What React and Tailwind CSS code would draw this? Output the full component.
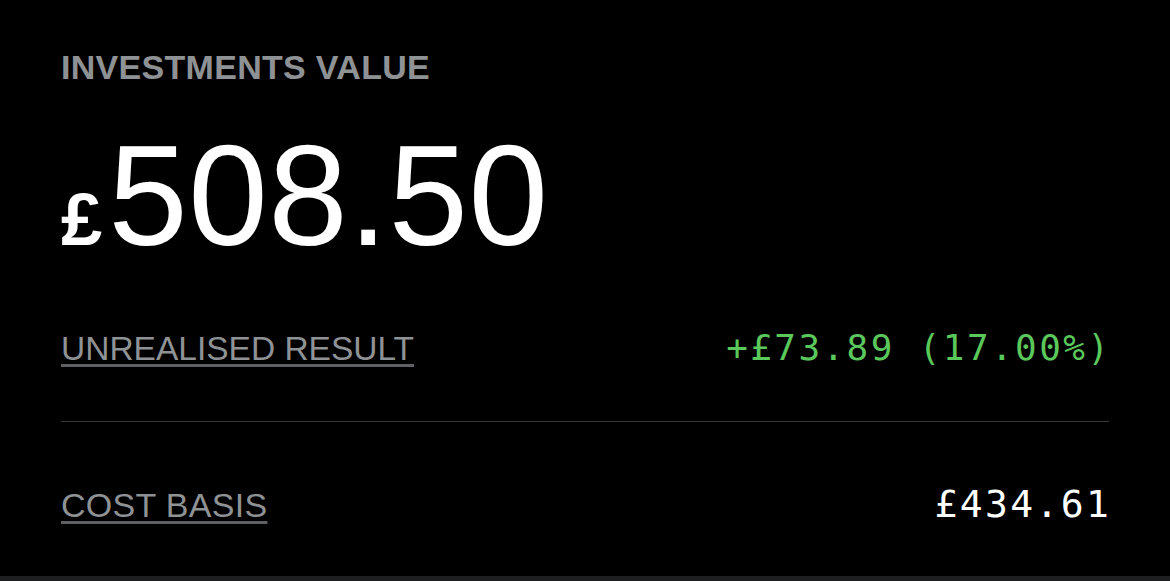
import React from 'react';

const sans = { fontFamily: '"Liberation Sans", Arial, sans-serif' };
const mono = { fontFamily: '"DejaVu Sans Mono", monospace' };

function Row({ label, labelClass, value, valueClass, className }) {
  return (
    <div className={`flex items-baseline justify-between h-[33px] ${className}`}>
      <span
        style={sans}
        className={`leading-none text-[#8f9295] underline decoration-[3px] decoration-[#5e6063] underline-offset-[4px] ${labelClass}`}
      >
        {label}
      </span>
      <span style={mono} className={valueClass}>
        {value}
      </span>
    </div>
  );
}

export default function App() {
  return (
    <div className="w-[1170px] h-[581px] bg-black flex flex-col overflow-hidden">
      <div className="flex-1 px-[61px] pt-[50px] flex flex-col">
        <div style={sans} className="text-[34px] leading-none font-bold tracking-[0.3px] text-[#8f9295]">
          INVESTMENTS VALUE
        </div>

        <div style={sans} className="flex items-baseline mt-[40px] h-[142px] text-white">
          <span className="text-[74px] leading-none font-semibold mr-[6px]">£</span>
          <span className="text-[143px] leading-none tracking-[0.5px]">508.50</span>
        </div>

        <Row
          className="mt-[64px]"
          label="UNREALISED RESULT"
          labelClass="text-[33.5px]"
          value="+£73.89 (17.00%)"
          valueClass="text-[36px] leading-none tracking-[2.4px] -mr-[2.4px] text-[#5bc85c]"
        />

        <div className="mt-[58px] border-t border-[#38393b]" />

        <Row
          className="mt-[63px]"
          label="COST BASIS"
          labelClass="text-[34px] tracking-[0.3px]"
          value="£434.61"
          valueClass="text-[38px] leading-none tracking-[2.4px] -mr-[2.4px] text-white"
        />
      </div>
      <div className="h-[5px] bg-[#1e1f21]" />
    </div>
  );
}
